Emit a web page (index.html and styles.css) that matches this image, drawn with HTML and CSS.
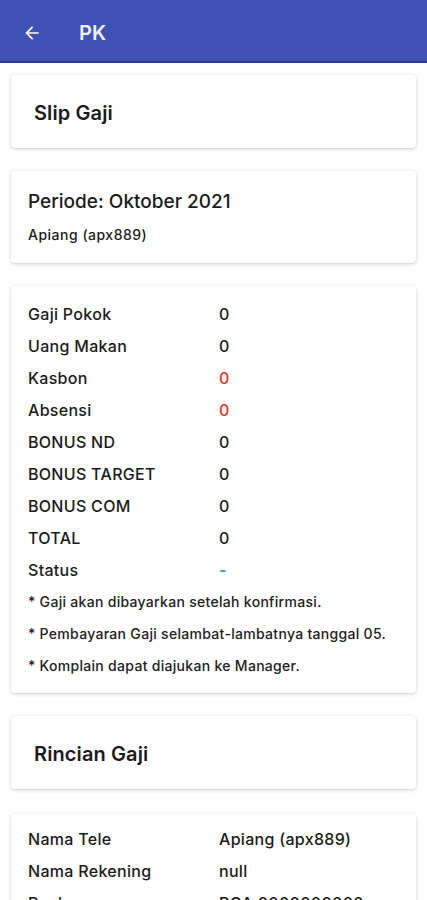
FILE: index.html
```html
<!DOCTYPE html>
<html lang="id">
<head>
<meta charset="utf-8">
<title>PK</title>
<link rel="stylesheet" href="styles.css">
</head>
<body>
<header class="appbar">
  <svg class="back" width="20" height="20" viewBox="0 0 24 24"><path d="M20 11H7.83l5.59-5.59L12 4l-8 8 8 8 1.41-1.41L7.83 13H20v-2z" fill="#fff"/></svg>
  <span class="title">PK</span>
</header>
<main class="content">
  <section class="card head-card"><h2>Slip Gaji</h2></section>
  <section class="card period-card">
    <h3>Periode: Oktober 2021</h3>
    <p class="sub">Apiang (apx889)</p>
  </section>
  <section class="card list-card">
    <div class="row"><span class="lbl">Gaji Pokok</span><span class="val">0</span></div>
    <div class="row"><span class="lbl">Uang Makan</span><span class="val">0</span></div>
    <div class="row"><span class="lbl">Kasbon</span><span class="val red">0</span></div>
    <div class="row"><span class="lbl">Absensi</span><span class="val red">0</span></div>
    <div class="row"><span class="lbl">BONUS ND</span><span class="val">0</span></div>
    <div class="row"><span class="lbl">BONUS TARGET</span><span class="val">0</span></div>
    <div class="row"><span class="lbl">BONUS COM</span><span class="val">0</span></div>
    <div class="row"><span class="lbl">TOTAL</span><span class="val">0</span></div>
    <div class="row"><span class="lbl">Status</span><span class="val blue">-</span></div>
    <p class="note">* Gaji akan dibayarkan setelah konfirmasi.</p>
    <p class="note">* Pembayaran Gaji selambat-lambatnya tanggal 05.</p>
    <p class="note">* Komplain dapat diajukan ke Manager.</p>
  </section>
  <section class="card head-card"><h2>Rincian Gaji</h2></section>
  <section class="card list-card detail">
    <div class="row"><span class="lbl">Nama Tele</span><span class="val">Apiang (apx889)</span></div>
    <div class="row"><span class="lbl">Nama Rekening</span><span class="val">null</span></div>
    <div class="row"><span class="lbl">Bank</span><span class="val">BCA 0000000000</span></div>
    <div class="row"><span class="lbl">Tanggal</span><span class="val">-</span></div>
  </section>
</main>
</body>
</html>
```
FILE: styles.css
```css
html, body {
  margin: 0;
  padding: 0;
  background: #ffffff;
  font-family: Inter, "Noto Sans", sans-serif;
  color: #1b1b1b;
}
.appbar {
  height: 57px;
  padding-top: 4px;
  background: #3f51b5;
  border-bottom: 2px solid #2b3a9a;
  display: flex;
  align-items: center;
  padding-left: 22px;
}
.back {
  display: block;
  width: 20px;
  height: 20px;
}
.title {
  color: #eef0fb;
  font-size: 20px;
  font-weight: 600;
  margin-left: 37px;
  letter-spacing: 0.2px;
}
.content {
  padding: 12px 11px 0;
  display: flex;
  flex-direction: column;
  gap: 23px;
}
.card {
  background: #fff;
  border-radius: 4px;
  box-shadow: 0 1px 4px rgba(0,0,0,0.16), 0 1px 2px rgba(0,0,0,0.06);
}
.head-card {
  height: 73px;
  display: flex;
  align-items: center;
  padding-left: 23px;
}
.head-card h2 {
  margin: 0;
  font-size: 20px;
  font-weight: 600;
  padding-top: 3px;
  letter-spacing: 0.1px;
}
.period-card {
  height: 92px;
  padding: 19px 17px 0;
  box-sizing: border-box;
}
.period-card h3 {
  margin: 0;
  font-size: 19px;
  font-weight: 500;
  line-height: 24px;
}
.period-card .sub {
  margin: 12px 0 0;
  font-size: 14px;
  font-weight: 500;
  line-height: 18px;
  letter-spacing: 0.5px;
}
.list-card {
  padding: 12px 17px 11px;
}
.row {
  display: flex;
  height: 32px;
  align-items: center;
  font-size: 16px;
  font-weight: 500;
  letter-spacing: 0.3px;
}
.lbl {
  width: 191px;
  flex: none;
}
.val.red { color: #e0322b; }
.val.blue { color: #3f9be6; font-weight: 700; }
.note {
  margin: 0;
  height: 32px;
  line-height: 32px;
  font-size: 14px;
  font-weight: 500;
  color: #222;
  letter-spacing: 0.3px;
}
.list-card.detail {
  padding-top: 9px;
  margin-top: 2px;
}
```
